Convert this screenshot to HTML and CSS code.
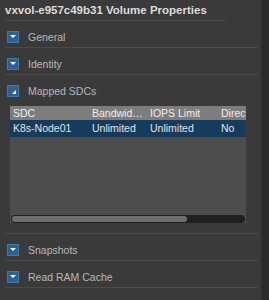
FILE: index.html
```html
<!DOCTYPE html>
<html lang="en">
  <head>
    <meta charset="UTF-8" />
    <title>Volume Properties</title>
    <link rel="stylesheet" href="styles.css">
  </head>
  <body>
    <div class="panel">
      <div class="panel-title">vxvol-e957c49b31 Volume Properties</div>

      <div class="section">
        <div class="section-header">
          <span class="toggle collapsed"></span>
          <span class="section-label">General</span>
        </div>
      </div>

      <div class="section">
        <div class="section-header">
          <span class="toggle collapsed"></span>
          <span class="section-label">Identity</span>
        </div>
      </div>

      <div class="section">
        <div class="section-header">
          <span class="toggle expanded"></span>
          <span class="section-label">Mapped SDCs</span>
        </div>
        <div class="section-body">
          <div class="grid">
            <div class="grid-row grid-head">
              <div class="cell col-sdc">SDC</div>
              <div class="cell col-bw">Bandwidth Limit</div>
              <div class="cell col-iops">IOPS Limit</div>
              <div class="cell col-dir">Direct</div>
            </div>
            <div class="grid-row selected">
              <div class="cell col-sdc">K8s-Node01</div>
              <div class="cell col-bw">Unlimited</div>
              <div class="cell col-iops">Unlimited</div>
              <div class="cell col-dir">No</div>
            </div>
            <div class="grid-fill"></div>
            <div class="scrollbar"><div class="thumb"></div></div>
          </div>
        </div>
      </div>

      <div class="section">
        <div class="section-header">
          <span class="toggle collapsed"></span>
          <span class="section-label">Snapshots</span>
        </div>
      </div>

      <div class="section">
        <div class="section-header">
          <span class="toggle collapsed"></span>
          <span class="section-label">Read RAM Cache</span>
        </div>
      </div>
    </div>
  </body>
</html>
```

FILE: styles.css
```css
body {
  margin: 0;
  background-color: #2b2b2b;
  font-family: "Liberation Sans", Arial, sans-serif;
  height: 300px;
  overflow: hidden;
}

.panel {
  width: 253px;
  height: 300px;
  padding: 0 3px 0 5px;
  background-color: #3a3a3a;
  border-right: 1px solid #2f2f2f;
}

.panel-title {
  width: 220px;
  height: 20px;
  line-height: 21px;
  font-size: 11.5px;
  font-weight: bold;
  color: #dcdcdc;
  border-bottom: 1px solid #4a4a4a;
  white-space: nowrap;
}

.section {
  border-bottom: 1px solid #4a4a4a;
}

.section-header {
  height: 26px;
  box-sizing: border-box;
  display: flex;
  align-items: flex-start;
  padding: 10px 0 0 2px;
}

.section-label {
  font-size: 10.5px;
  line-height: 12px;
  color: #b8b8b8;
  margin-left: 9px;
}

.toggle {
  position: relative;
  width: 10px;
  height: 10px;
  flex-shrink: 0;
  border: 1px solid #3f78ad;
  background-color: #2c6096;
}

.toggle.collapsed::after {
  content: "";
  position: absolute;
  left: 2px;
  top: 3px;
  border-left: 3px solid transparent;
  border-right: 3px solid transparent;
  border-top: 3px solid #ffffff;
}

.toggle.expanded::after {
  content: "";
  position: absolute;
  right: 2px;
  bottom: 2px;
  border-left: 4px solid transparent;
  border-bottom: 4px solid #ffffff;
}

.section-body {
  padding: 5px 12px 10px 5px;
}

.grid {
  width: 236px;
  background-color: #4d4d4d;
  font-size: 10.5px;
}

.grid-row {
  display: flex;
  white-space: nowrap;
}

.cell {
  padding-left: 3px;
  overflow: hidden;
  text-overflow: ellipsis;
  flex-shrink: 0;
  box-sizing: border-box;
}

.col-sdc { width: 79px; }
.col-bw { width: 58px; padding-right: 2px; }
.col-iops { width: 71px; }
.col-dir { width: 28px; text-overflow: clip; }

.grid-head {
  height: 14px;
  line-height: 14px;
  background-color: #7d7d7d;
  color: #eeeeee;
}

.grid-row.selected {
  height: 17px;
  line-height: 17px;
  background-color: #173b5c;
  color: #e4e4e4;
}

.grid-fill {
  height: 78px;
}

.scrollbar {
  height: 8px;
  margin: 0 1px;
  border-radius: 4px;
  background-color: #1f1f1f;
  display: flex;
  align-items: center;
  padding: 0 1px;
}

.thumb {
  width: 175px;
  height: 6px;
  border-radius: 3px;
  background-color: #6e6e6e;
}
```
